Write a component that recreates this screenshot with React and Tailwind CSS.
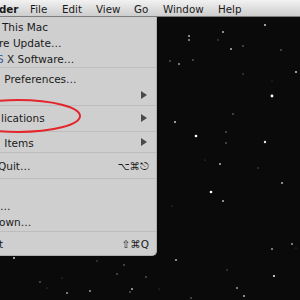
import React from "react";

// star field: [x, y, radius, opacity]
const stars = [
  [265, 25, 1, 0.8], [189, 36, 1, 0.7], [189, 40, 1, 0.6], [223, 32, 1, 0.7], [218, 40, 0.7, 0.4],
  [243, 46, 0.8, 0.5], [231, 49, 1, 0.7], [281, 50, 0.8, 0.5], [170, 61, 0.8, 0.5], [179, 64, 1, 0.6],
  [193, 60, 0.8, 0.5], [296, 72, 1, 0.8], [243, 74, 0.7, 0.4], [272, 96, 1.4, 1], [272, 81, 0.6, 0.3],
  [175, 122, 1, 0.8], [196, 136, 1.3, 1], [265, 142, 1.2, 0.9], [233, 114, 0.8, 0.5], [226, 132, 0.8, 0.5],
  [226, 143, 0.8, 0.5], [220, 164, 1, 0.7], [205, 160, 0.6, 0.3], [282, 183, 1, 0.7], [211, 192, 1.3, 1],
  [223, 201, 1, 0.7], [172, 206, 0.6, 0.3], [292, 244, 1, 0.6], [272, 249, 1, 0.6], [176, 260, 1, 0.7],
  [274, 276, 1.1, 0.9], [227, 270, 0.7, 0.4], [237, 288, 1, 0.6], [244, 296, 1, 0.7], [191, 298, 0.8, 0.5],
  [296, 248, 0.6, 0.3], [159, 289, 0.6, 0.3], [14, 258, 1, 0.8], [97, 261, 0.7, 0.4], [117, 274, 0.8, 0.5],
  [124, 265, 0.8, 0.5], [40, 282, 0.8, 0.5], [47, 288, 0.6, 0.3], [62, 278, 0.6, 0.3], [67, 293, 1, 0.6],
  [90, 291, 1, 0.6], [132, 289, 1, 0.7], [146, 277, 0.8, 0.5], [130, 292, 0.8, 0.5], [258, 168, 0.7, 0.4],
];

function Arrow() {
  return (
    <svg width="6" height="8" viewBox="0 0 6 8" className="mr-[9px]">
      <path d="M0 0 L6 4 L0 8 Z" fill="#4a4a4a" />
    </svg>
  );
}

function Row({ children, right, arrow }) {
  return (
    <div className="h-[16px] flex items-center justify-between whitespace-nowrap">
      <div className="flex items-center pt-[3px]">{children}</div>
      {arrow && <Arrow />}
      {right && <span className="mr-[7px] pt-[3px] text-[#1a1a1a]">{right}</span>}
    </div>
  );
}

export default function App() {
  return (
    <div className="relative w-[300px] h-[300px] overflow-hidden bg-[#0a0a0a] font-['DejaVu_Sans',sans-serif] text-[10.5px] text-[#1a1a1a]">
      {/* stars */}
      <svg className="absolute inset-0" width="300" height="300">
        {stars.map(([x, y, r, o], i) => (
          <circle key={i} cx={x} cy={y} r={r} fill="#ffffff" opacity={o} />
        ))}
      </svg>

      {/* Menu bar */}
      <div className="relative h-[17px] flex items-center pt-[3px] bg-gradient-to-b from-[#f2f2f2] to-[#cdcdcd] border-b border-[#7d7d7d] text-[10.3px] whitespace-nowrap">
        <span className="w-[31px] font-bold -ml-[1px]">der</span>
        <span className="w-[32px]">File</span>
        <span className="w-[34px]">Edit</span>
        <span className="w-[38px]">View</span>
        <span className="w-[29px]">Go</span>
        <span className="w-[55px]">Window</span>
        <span>Help</span>
      </div>

      {/* Apple menu */}
      <div className="absolute left-0 top-[17px] w-[157px] bg-[#dadada]/95 border-r border-b border-[#b0b0b0] rounded-br-[5px] overflow-hidden">
        <div className="h-[51px] flex flex-col justify-center border-b border-[#bdbdbd]">
          <Row><span className="-ml-[5.5px]">t This Mac</span></Row>
          <Row><span className="-ml-[1px]">re Update…</span></Row>
          <Row><span className="-ml-[3px]"><span className="text-[#3d5f9e]">S</span> X Software…</span></Row>
        </div>
        <div className="h-[38px] flex flex-col justify-center border-b border-[#bdbdbd]">
          <Row><span className="ml-[1px]">&nbsp;Preferences…</span></Row>
          <Row arrow />
        </div>
        <div className="h-[26px] flex flex-col justify-center pb-[2px] border-b border-[#bdbdbd]">
          <Row arrow><span className="ml-[1px]">lications</span></Row>
        </div>
        <div className="h-[21px] flex flex-col justify-center border-b border-[#bdbdbd]">
          <Row arrow><span className="ml-[1px]">&nbsp;Items</span></Row>
        </div>
        <div className="h-[26px] flex flex-col justify-center border-b border-[#bdbdbd]">
          <Row right="⌥⌘⎋"><span className="-ml-[2px]">Quit…</span></Row>
        </div>
        <div className="h-[53px] flex flex-col justify-center border-b border-[#bdbdbd]">
          <Row />
          <Row><span>…</span></Row>
          <Row><span className="-ml-[1px]">own…</span></Row>
        </div>
        <div className="h-[23px] flex flex-col justify-center">
          <Row right="⇧⌘Q"><span className="-ml-[1px]">t</span></Row>
        </div>
      </div>

      {/* red circle */}
      <svg className="absolute left-0 top-0" width="300" height="300">
        <ellipse cx="18" cy="116" rx="62" ry="16" fill="none" stroke="#e3262c" strokeWidth="2" />
      </svg>
    </div>
  );
}
